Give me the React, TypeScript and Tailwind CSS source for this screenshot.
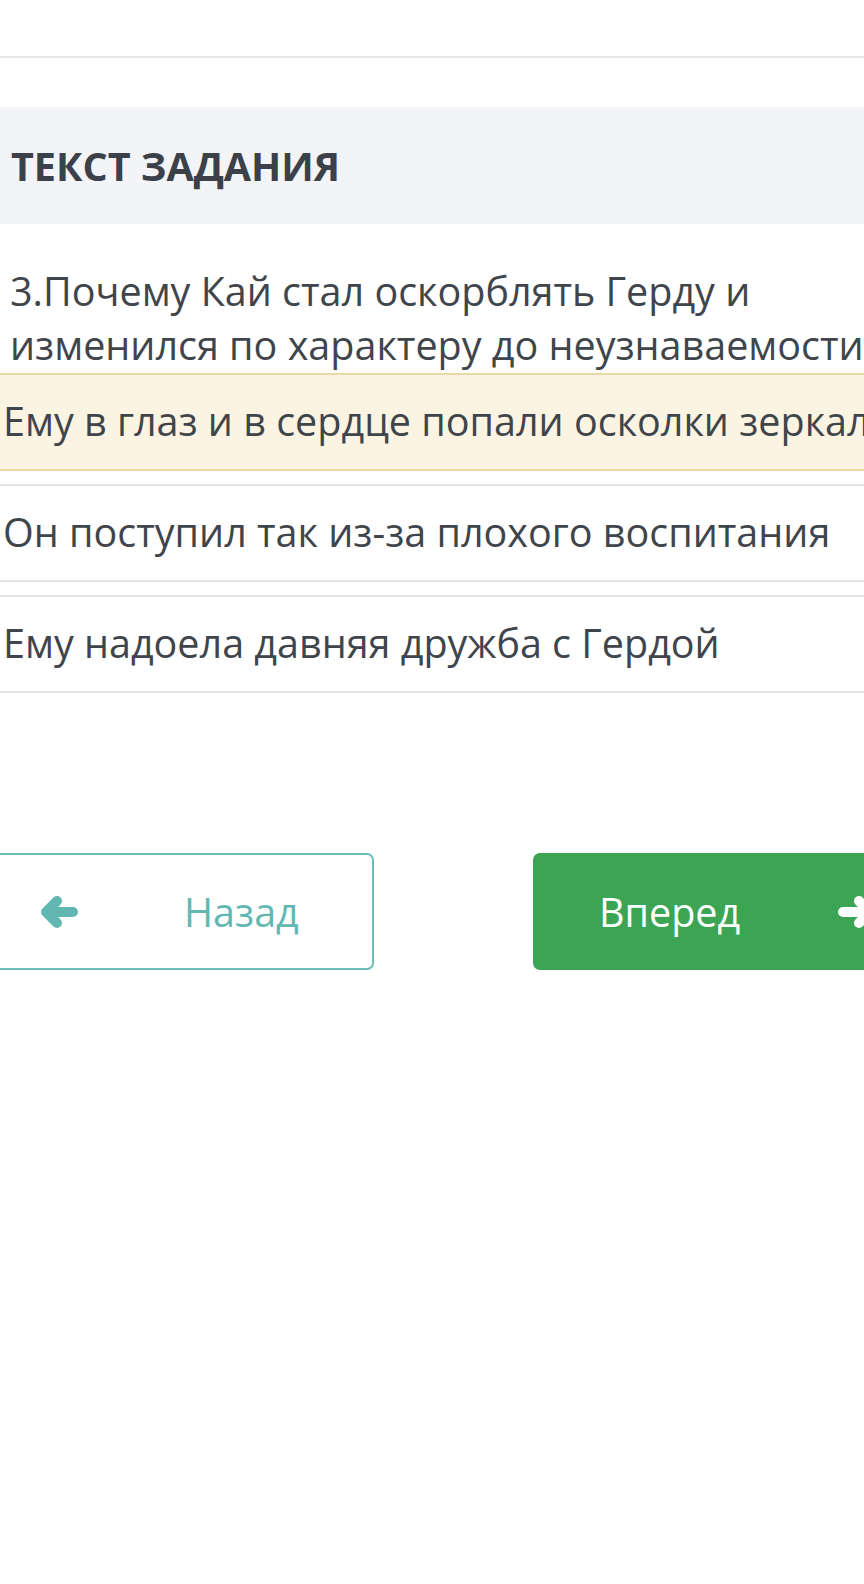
import type { ReactNode } from "react";

type Choice = {
  id: number;
  text: string;
  selected?: boolean;
};

const CHOICES: Choice[] = [
  { id: 1, text: "Ему в глаз и в сердце попали осколки зеркала", selected: true },
  { id: 2, text: "Он поступил так из-за плохого воспитания" },
  { id: 3, text: "Ему надоела давняя дружба с Гердой" },
];

// Thick FA-style arrow with round caps; mirrored for "forward".
function Arrow({ dir, className }: { dir: "left" | "right"; className?: string }) {
  return (
    <svg
      viewBox="0 0 38 32"
      width={38}
      height={32}
      className={className}
      style={dir === "right" ? { transform: "scaleX(-1)" } : undefined}
      fill="none"
      stroke="currentColor"
      strokeWidth={10}
      strokeLinecap="round"
      strokeLinejoin="round"
      aria-hidden
    >
      <path d="M33 16H7M17 5L6 16l11 11" />
    </svg>
  );
}

function ChoiceRow({ choice }: { choice: Choice }) {
  return (
    <div
      className={
        choice.selected
          ? "whitespace-nowrap border-y-2 border-[#ebd8a7] bg-[#fcf4e2] pb-[21px] pl-[3px] pt-[19px]"
          : "whitespace-nowrap border-y-2 border-[#e4e4e4] bg-white pb-[21px] pl-[3px] pt-[19px]"
      }
    >
      {choice.text}
    </div>
  );
}

function NavButton({
  children,
  className,
}: {
  children: ReactNode;
  className: string;
}) {
  return (
    <button type="button" className={`flex h-[117px] shrink-0 items-center rounded-[7px] ${className}`}>
      {children}
    </button>
  );
}

export default function App() {
  return (
    <div className="min-h-screen w-[864px] overflow-hidden bg-white pt-[56px] font-['Open_Sans',sans-serif] text-[39.5px] leading-[54px] text-[#40454c]">
      <div className="border-t-2 border-[#e6e6e6] pt-[49px]">
        <div className="flex h-[117px] items-center bg-[#f3f4f8] pl-[11px] font-bold text-[#3c4049]">
          ТЕКСТ ЗАДАНИЯ
        </div>

        <div className="mt-[40px] whitespace-nowrap pl-[10px]">
          3.Почему Кай стал оскорблять Герду и
          <br />
          изменился по характеру до неузнаваемости?
        </div>

        <div className="mt-[1px] flex flex-col gap-[13px]">
          {CHOICES.map((c) => (
            <ChoiceRow key={c.id} choice={c} />
          ))}
        </div>

        <div className="mt-[160px] flex gap-[159px]">
          <NavButton className="-ml-[6px] w-[380px] border-2 border-[#6cbcb7] bg-white pl-[44px] text-[#62b7b3]">
            <Arrow dir="left" />
            <span className="ml-[106px]">Назад</span>
          </NavButton>
          <NavButton className="w-[400px] bg-[#3ba553] pl-[66px] text-white">
            <span>Вперед</span>
            <Arrow dir="right" className="ml-[98px]" />
          </NavButton>
        </div>
      </div>
    </div>
  );
}
